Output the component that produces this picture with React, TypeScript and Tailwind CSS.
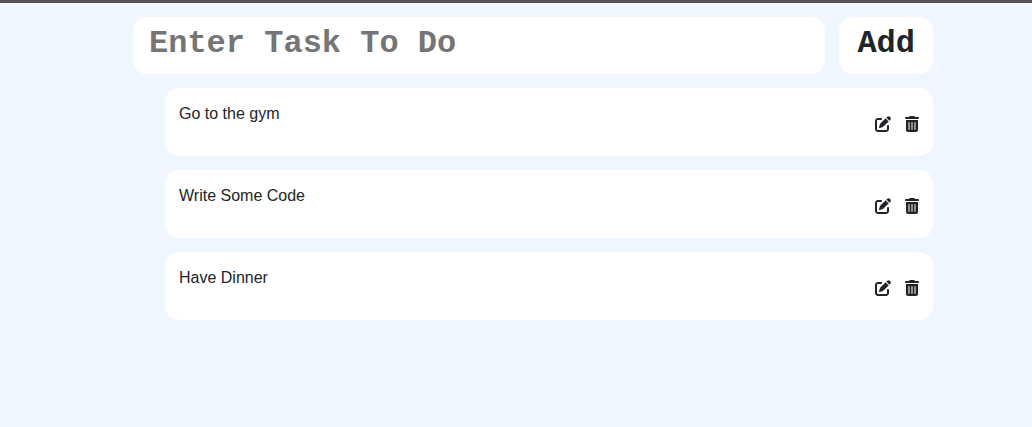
import { useState } from "react";
import type { FormEvent } from "react";
import { FaPenToSquare, FaTrashCan } from "react-icons/fa6";

type Task = { id: number; title: string };

const initialTasks: Task[] = [
  { id: 1, title: "Go to the gym" },
  { id: 2, title: "Write Some Code" },
  { id: 3, title: "Have Dinner" },
];

type TaskRowProps = { task: Task; onEdit: () => void; onDelete: () => void };

function TaskRow({ task, onEdit, onDelete }: TaskRowProps) {
  return (
    <li className="flex min-h-[68px] justify-between gap-4 rounded-[14px] bg-white px-3.5 py-3.5">
      <p className="min-w-0 text-base">{task.title}</p>
      <div className="flex shrink-0 items-center gap-3.5 pt-1">
        <button type="button" aria-label={`Edit ${task.title}`} onClick={onEdit} className="cursor-pointer">
          <FaPenToSquare className="h-4 w-4" />
        </button>
        <button type="button" aria-label={`Delete ${task.title}`} onClick={onDelete} className="cursor-pointer">
          <FaTrashCan className="h-4 w-3.5" />
        </button>
      </div>
    </li>
  );
}

export default function App() {
  const [tasks, setTasks] = useState<Task[]>(initialTasks);
  const [draft, setDraft] = useState("");

  const remove = (id: number) => setTasks((list) => list.filter((t) => t.id !== id));

  const submit = (event: FormEvent) => {
    event.preventDefault();
    const title = draft.trim();
    if (!title) return;
    setTasks((list) => [...list, { id: Date.now(), title }]);
    setDraft("");
  };

  const edit = (task: Task) => {
    setDraft(task.title);
    remove(task.id);
  };

  return (
    <div className="min-h-screen border-t-[3px] border-[#555558] bg-[#eff6ff] pr-4 pl-[50px] font-['Liberation_Sans',Arial,sans-serif] text-[#212529]">
      <main className="mx-auto flex max-w-[800px] flex-col gap-3.5 py-3.5">
        <form onSubmit={submit} className="flex gap-3.5 font-['Liberation_Mono',monospace] text-[32px] leading-8 font-bold">
          <input
            type="text"
            aria-label="Task"
            placeholder="Enter Task To Do"
            value={draft}
            onChange={(event) => setDraft(event.target.value)}
            className="min-w-0 flex-1 rounded-[14px] bg-white px-4 pt-2 pb-3 outline-none placeholder:text-[#757575] placeholder:opacity-100"
          />
          <button type="submit" className="cursor-pointer rounded-[14px] bg-white px-[18px] pt-2.5 pb-3.5">
            Add
          </button>
        </form>
        <ul className="flex flex-col gap-3.5 pl-8">
          {tasks.map((task) => (
            <TaskRow key={task.id} task={task} onEdit={() => edit(task)} onDelete={() => remove(task.id)} />
          ))}
        </ul>
      </main>
    </div>
  );
}
